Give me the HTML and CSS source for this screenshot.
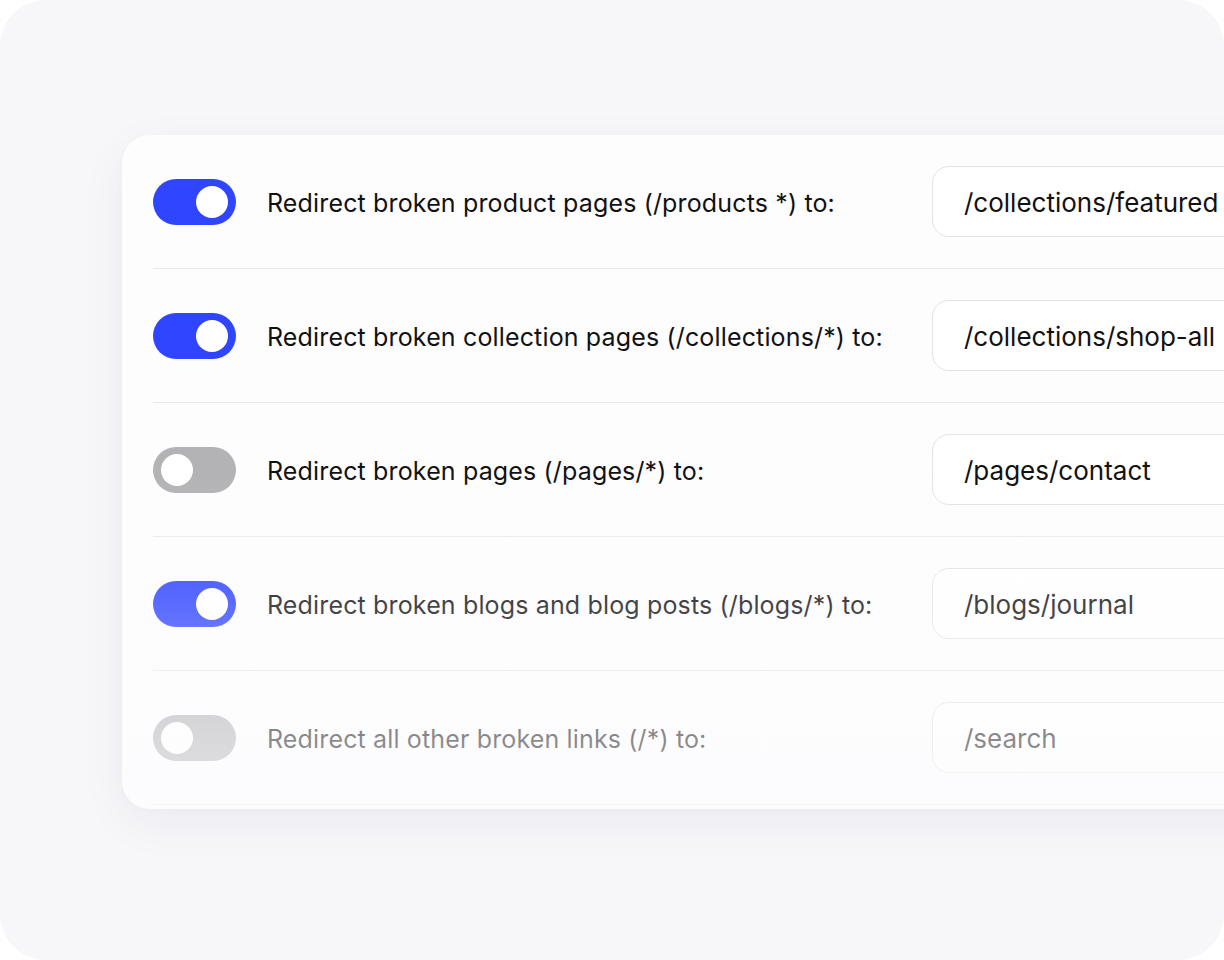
FILE: index.html
```html
<!DOCTYPE html>
<html lang="en">
<head>
<meta charset="UTF-8">
<meta name="viewport" content="width=device-width, initial-scale=1.0">
<title>Broken Link Redirects</title>
<link rel="stylesheet" href="styles.css">
</head>
<body>
<div class="frame">
  <div class="redirect-card">
    <div class="redirect-row">
      <span class="toggle on"><span class="knob"></span></span>
      <span class="redirect-label">Redirect broken product pages (/products *) to:</span>
      <div class="path-input">/collections/featured</div>
    </div>
    <div class="redirect-row">
      <span class="toggle on"><span class="knob"></span></span>
      <span class="redirect-label">Redirect broken collection pages (/collections/*) to:</span>
      <div class="path-input">/collections/shop-all</div>
    </div>
    <div class="redirect-row">
      <span class="toggle"><span class="knob"></span></span>
      <span class="redirect-label">Redirect broken pages (/pages/*) to:</span>
      <div class="path-input">/pages/contact</div>
    </div>
    <div class="redirect-row">
      <span class="toggle on"><span class="knob"></span></span>
      <span class="redirect-label">Redirect broken blogs and blog posts (/blogs/*) to:</span>
      <div class="path-input">/blogs/journal</div>
    </div>
    <div class="redirect-row">
      <span class="toggle"><span class="knob"></span></span>
      <span class="redirect-label">Redirect all other broken links (/*) to:</span>
      <div class="path-input">/search</div>
    </div>

    <!-- fade towards the bottom of the card -->
    <div class="card-fade"></div>
  </div>
</div>
</body>
</html>
```

FILE: styles.css
```css
:root {
  --text-color: #111114;
  --line-color: #e8e8eb;
  --accent: #3045ff;
  --frame-bg: #f7f7fa;
}

body {
  margin: 0;
  padding: 0;
  background: #ffffff;
  font-family: Inter, "Noto Sans", sans-serif;
  color: var(--text-color);
}

.frame {
  width: 1224px;
  height: 960px;
  background: var(--frame-bg);
  border-radius: 46px;
  overflow: hidden;
  padding: 135px 0 0 122px;
  box-sizing: border-box;
}

.redirect-card {
  position: relative;
  width: 1300px;
  background: #fdfdfe;
  border-radius: 28px;
  padding: 0 0 4px 31px;
  box-shadow: 0 14px 48px rgba(30, 30, 70, 0.05), 0 2px 8px rgba(30, 30, 70, 0.02);
}

.redirect-row {
  display: grid;
  grid-template-columns: 83px 634px 1fr;
  gap: 31px;
  align-items: center;
  height: 133px;
  border-bottom: 1px solid var(--line-color);
}

.redirect-row:last-of-type {
  border-bottom: none;
}

.toggle {
  position: relative;
  width: 83px;
  height: 46px;
  border-radius: 23px;
  background: #b3b3b5;
}

.toggle.on {
  background: var(--accent);
}

.knob {
  position: absolute;
  top: 7px;
  left: 8px;
  width: 32px;
  height: 32px;
  border-radius: 50%;
  background: #fff;
}

.toggle.on .knob {
  left: auto;
  right: 8px;
}

.redirect-label {
  font-size: 25px;
  letter-spacing: 0.15px;
  white-space: nowrap;
  padding-top: 2px;
}

.path-input {
  height: 71px;
  box-sizing: border-box;
  border: 1px solid #e3e3e6;
  border-radius: 17px;
  background: #fff;
  padding: 2px 31px 0;
  display: flex;
  align-items: center;
  font-size: 26px;
  white-space: nowrap;
}

.card-fade {
  position: absolute;
  inset: 0;
  border-radius: 28px;
  pointer-events: none;
  background: linear-gradient(to bottom,
    rgba(252, 252, 254, 0) 50%,
    rgba(252, 252, 254, 0.2) 69%,
    rgba(252, 252, 254, 0.5) 89%,
    rgba(252, 252, 254, 0.65) 100%);
}
```
